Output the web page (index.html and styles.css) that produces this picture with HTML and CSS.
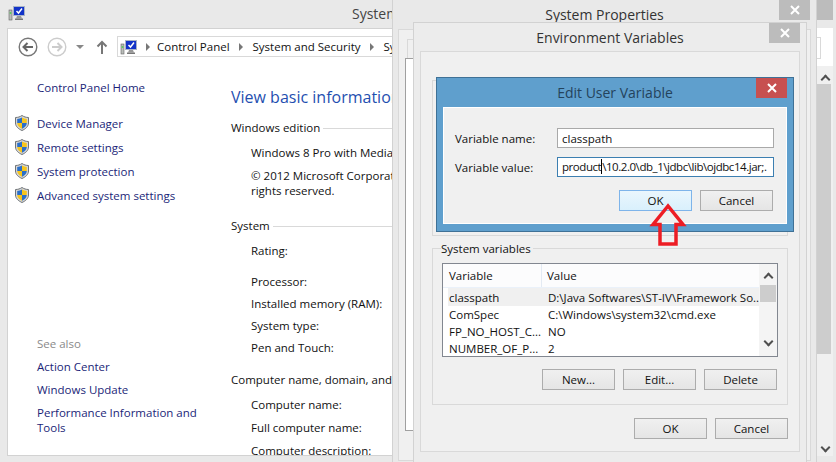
FILE: index.html
```html
<!DOCTYPE html>
<html lang="en">
<head>
    <meta charset="UTF-8">
    <meta name="viewport" content="width=device-width, initial-scale=1.0">
    <title>Edit User Variable</title>
    <link rel="stylesheet" href="styles.css">
</head>
<body>
    <svg class="defs" width="0" height="0">
        <symbol id="pc" viewBox="0 0 17 16">
            <rect x="1" y="5" width="3" height="10" fill="#b9bdb9" stroke="#666" stroke-width=".6"/>
            <rect x="1.7" y="7" width="1.6" height="2" fill="#5fcf5f"/>
            <rect x="5" y="1" width="12" height="10" fill="#a9b4c6"/>
            <rect x="6" y="2" width="10" height="8" fill="#1233c8"/>
            <path d="M8.5 6l2 2 3.500-4.500" fill="none" stroke="#fff" stroke-width="1.500"/>
            <path d="M9 11h4l1 2.500H8z" fill="#999"/>
            <rect x="7" y="13.500" width="8" height="1.500" fill="#777"/>
        </symbol>
        <symbol id="shield" viewBox="0 0 14 16">
            <path d="M7 .5c2 1.300 4 2 6.500 2v5.500c0 3.500-3 6-6.500 7.500C3.500 14 .5 11.500.5 8V2.500C3 2.500 5 1.800 7 .5z" fill="#d6d6d6" stroke="#6f7478"/>
            <path d="M7 2.500c1.500.9 3 1.400 4.800 1.600V8H7z" fill="#f6c51c"/>
            <path d="M7 2.500C5.500 3.400 4 3.900 2.200 4.100V8H7z" fill="#2a6fc9"/>
            <path d="M2.200 8H7v5.800C4.500 12.700 2.400 10.700 2.200 8z" fill="#f6c51c"/>
            <path d="M11.800 8H7v5.800c2.500-1.100 4.600-3.100 4.800-5.800z" fill="#2a6fc9"/>
        </symbol>
        <symbol id="x" viewBox="0 0 10 10">
            <path d="M1 1l8 8M9 1l-8 8" stroke="#fff" stroke-width="2" fill="none"/>
        </symbol>
    </svg>

    <!-- control panel, behind everything -->
    <div class="window explorer">
        <div class="titlebar">
            <svg class="title-icon" width="17" height="16"><use href="#pc"/></svg>
            <span class="explorer-title">System</span>
        </div>
        <div class="client">
            <div class="toolbar">
                <svg class="nav-btn" width="20" height="20" viewBox="0 0 20 20">
                    <circle cx="10" cy="10" r="8.800" fill="#fff" stroke="#777" stroke-width="1.400"/>
                    <path d="M15 10H6M9.500 6l-4 4 4 4" fill="none" stroke="#666" stroke-width="2"/>
                </svg>
                <svg class="nav-btn" width="20" height="20" viewBox="0 0 20 20">
                    <circle cx="10" cy="10" r="8.800" fill="#fff" stroke="#ccc" stroke-width="1.400"/>
                    <path d="M5 10h9M10.500 6l4 4-4 4" fill="none" stroke="#ccc" stroke-width="2"/>
                </svg>
                <span class="caret"></span>
                <svg class="up-btn" width="12" height="14" viewBox="0 0 12 14">
                    <path d="M6 14V2M1.500 6.500L6 2l4.500 4.500" fill="none" stroke="#777" stroke-width="2"/>
                </svg>
                <div class="address">
                    <svg width="17" height="16"><use href="#pc"/></svg>
                    <span class="crumb-arrow first"></span>
                    <span>Control Panel</span>
                    <span class="crumb-arrow"></span>
                    <span>System and Security</span>
                    <span class="crumb-arrow"></span>
                    <span>System</span>
                </div>
            </div>
            <div class="columns">
                <nav class="sidebar">
                    <a class="home">Control Panel Home</a>
                    <a class="task"><svg width="14" height="16"><use href="#shield"/></svg>Device Manager</a>
                    <a class="task"><svg width="14" height="16"><use href="#shield"/></svg>Remote settings</a>
                    <a class="task"><svg width="14" height="16"><use href="#shield"/></svg>System protection</a>
                    <a class="task"><svg width="14" height="16"><use href="#shield"/></svg>Advanced system settings</a>
                    <div class="see-also">See also</div>
                    <a class="also">Action Center</a>
                    <a class="also">Windows Update</a>
                    <a class="also">Performance Information and<br>Tools</a>
                </nav>
                <main class="info">
                    <h1>View basic information about your computer</h1>
                    <div class="section s-edition"><span>Windows edition</span></div>
                    <p class="line l-pro">Windows 8 Pro with Media Center</p>
                    <p class="line l-copy">© 2012 Microsoft Corporation. All<br>rights reserved.</p>
                    <div class="section s-system"><span>System</span></div>
                    <p class="line l-rating">Rating:</p>
                    <p class="line l-proc">Processor:</p>
                    <p class="line l-row">Installed memory (RAM):</p>
                    <p class="line l-row">System type:</p>
                    <p class="line l-row">Pen and Touch:</p>
                    <div class="section s-name"><span>Computer name, domain, and workgroup settings</span></div>
                    <p class="line l-cname">Computer name:</p>
                    <p class="line l-wide">Full computer name:</p>
                    <p class="line l-wide">Computer description:</p>
                </main>
            </div>
        </div>
    </div>

    <!-- second control panel edge at the far right -->
    <div class="window right-edge">
        <div class="edge-top"></div>
        <div class="edge-client">
            <div class="edge-tab"></div>
            <div class="edge-scroll">
                <span class="chev up"></span>
                <div class="edge-thumb"></div>
                <span class="chev down"></span>
            </div>
        </div>
    </div>

    <div class="window sysprops">
        <div class="dlg-title">System Properties</div>
        <button class="close grey"><svg width="10" height="10"><use href="#x"/></svg></button>
        <div class="sys-panel">
            <div class="sys-tab"></div>
            <div class="sys-page"></div>
        </div>
    </div>

    <div class="window envvars">
        <div class="dlg-title">Environment Variables</div>
        <button class="close grey"><svg width="10" height="10"><use href="#x"/></svg></button>
        <div class="env-panel">
            <fieldset class="group user-group">
                <legend>User variables for Ishan</legend>
            </fieldset>
            <fieldset class="group system-group">
                <legend>System variables</legend>
                <div class="list">
                    <div class="list-main">
                        <div class="list-head"><span class="col-a">Variable</span><span class="col-b">Value</span></div>
                        <div class="list-row selected"><span class="col-a">classpath</span><span class="col-b">D:\Java Softwares\ST-IV\Framework So...</span></div>
                        <div class="list-row"><span class="col-a">ComSpec</span><span class="col-b">C:\Windows\system32\cmd.exe</span></div>
                        <div class="list-row"><span class="col-a">FP_NO_HOST_C...</span><span class="col-b">NO</span></div>
                        <div class="list-row"><span class="col-a">NUMBER_OF_P...</span><span class="col-b">2</span></div>
                    </div>
                    <div class="list-scroll">
                        <span class="chev up"></span>
                        <div class="list-thumb"></div>
                        <span class="chev down"></span>
                    </div>
                </div>
                <div class="btn-row">
                    <button class="btn">New...</button>
                    <button class="btn">Edit...</button>
                    <button class="btn">Delete</button>
                </div>
            </fieldset>
            <div class="btn-row env-actions">
                <button class="btn">OK</button>
                <button class="btn">Cancel</button>
            </div>
        </div>
    </div>

    <div class="window editvar">
        <div class="edit-title">Edit User Variable</div>
        <button class="close red"><svg width="10" height="10"><use href="#x"/></svg></button>
        <div class="edit-body">
            <div class="field">
                <label for="varname">Variable name:</label>
                <input id="varname" type="text" value="classpath">
            </div>
            <div class="field">
                <label>Variable value:</label>
                <div class="input focused">product<span class="cursor"></span>\10.2.0\db_1\jdbc\lib\ojdbc14.jar;.</div>
            </div>
            <div class="btn-row edit-actions">
                <button class="btn hot">OK</button>
                <button class="btn">Cancel</button>
            </div>
        </div>
    </div>

    <svg class="pointer" width="38" height="44" viewBox="0 0 38 44">
        <path d="M19 3L4 21.500h7V41h16V21.500h7z" fill="none" stroke="#ed1c24" stroke-width="3.500"/>
    </svg>
</body>
</html>
```

FILE: styles.css
```css
html, body {
    margin: 0;
    height: 100%;
}
body {
    position: relative;
    width: 836px;
    height: 462px;
    overflow: hidden;
    background: #e9e9e9;
    font-family: "Open Sans", Arial, sans-serif;
    font-size: 11.5px;
    color: #111;
}
svg {
    flex: none;
}
.defs {
    position: absolute;
}
.window {
    position: absolute;
    box-sizing: border-box;
    overflow: hidden;
}
button {
    font-family: inherit;
    font-size: inherit;
    color: inherit;
}

/* control panel */
.explorer {
    left: 0;
    top: 0;
    width: 392px;
    height: 462px;
    background: #e9e9e9;
}
.titlebar {
    height: 28px;
    display: flex;
    align-items: flex-start;
}
.title-icon {
    margin: 5px 0 0 8px;
}
.explorer-title {
    margin: 4px 0 0 327px;
    font-size: 14px;
    color: #444;
    white-space: nowrap;
}
.client {
    margin-left: 7px;
    width: 385px;
    height: 428px;
    box-sizing: border-box;
    background: #fff;
    border: 1px solid #d2d2d2;
    border-right: none;
    overflow: hidden;
}
.toolbar {
    display: flex;
    align-items: center;
    height: 21px;
    margin-top: 7px;
    padding-left: 10px;
}
.nav-btn {
    margin-right: 9px;
}
.caret {
    flex: none;
    width: 0;
    height: 0;
    margin: 1px 0 0 0;
    border: 4px solid transparent;
    border-top: 4px solid #888;
    border-bottom: none;
}
.up-btn {
    margin: 0 0 0 12px;
}
.address {
    display: flex;
    align-items: center;
    flex: none;
    width: 300px;
    height: 21px;
    margin-left: 9px;
    padding-left: 2px;
    box-sizing: border-box;
    border: 1px solid #d9d9d9;
    white-space: nowrap;
}
.crumb-arrow {
    flex: none;
    width: 0;
    height: 0;
    margin: 0 10px 0 9px;
    border: 4px solid transparent;
    border-left: 4px solid #777;
    border-right: none;
}
.crumb-arrow.first {
    margin: 0 7px 0 9px;
}
.columns {
    display: flex;
}
.sidebar {
    width: 223px;
    flex: none;
    padding-left: 7px;
    box-sizing: border-box;
    color: #1b1f78;
}
.sidebar a {
    display: block;
    line-height: 15px;
}
.home {
    margin: 23px 0 20px 22px;
}
.sidebar .task {
    display: flex;
    align-items: center;
    gap: 8px;
    height: 16px;
    margin-bottom: 8px;
}
.see-also {
    margin: 133px 0 8px 22px;
    line-height: 15px;
    color: #8a8a8a;
}
.also {
    margin: 0 0 8px 22px;
}
.info {
    flex: none;
    width: 300px;
}
.info h1 {
    margin: 29px 0 0;
    font-size: 16px;
    font-weight: 400;
    line-height: 22px;
    color: #1f4fb0;
    white-space: nowrap;
}
.section {
    display: flex;
    align-items: center;
    line-height: 15px;
    white-space: nowrap;
}
.section span {
    padding-right: 3px;
}
.section::after {
    content: "";
    flex: 1;
    height: 1px;
    margin-top: 2px;
    background: #d9d9d9;
}
.s-edition { margin-top: 12px; }
.s-system { margin-top: 20px; }
.s-name { margin-top: 17px; }
.line {
    margin: 0 0 0 20px;
    line-height: 15px;
    white-space: nowrap;
}
.l-pro { margin-top: 10px; }
.l-copy { margin-top: 8px; }
.l-rating { margin-top: 10px; }
.l-proc { margin-top: 16px; }
.l-row { margin-top: 7px; }
.l-wide { margin-top: 8px; }
.l-cname { margin-top: 10px; }

/* far right sliver */
.right-edge {
    left: 817px;
    top: 0;
    width: 19px;
    height: 462px;
    background: #e9e9e9;
}
.edge-top {
    height: 20px;
    width: 16px;
    background: #bcbcbc;
}
.edge-client {
    margin-top: 8px;
    width: 16px;
    height: 428px;
    background: #fff;
    position: relative;
}
.edge-tab {
    width: 3px;
    height: 20px;
    top: 9px;
    position: absolute;
    border: 1px solid #d9d9d9;
    border-left: none;
}
.edge-scroll {
    position: absolute;
    top: 38px;
    left: 0;
    right: 0;
    bottom: 0;
    background: #f0f0f0;
    display: flex;
    flex-direction: column;
    align-items: center;
}
.edge-thumb {
    align-self: stretch;
    height: 270px;
    margin: 1px 2px 0 0;
    background: #cdcdcd;
}
.chev {
    display: block;
    width: 7px;
    height: 7px;
    flex: none;
    box-sizing: border-box;
    border: solid #505050;
    border-width: 2px 0 0 2px;
    transform: rotate(45deg);
}
.chev.down {
    transform: rotate(225deg);
}
.edge-scroll .chev.up {
    margin-top: 10px;
}
.edge-scroll .chev.down {
    margin-top: 90px;
}

/* system properties */
.sysprops {
    left: 392px;
    top: 0;
    width: 425px;
    height: 462px;
    background: #e9e9e9;
    border-left: 1px solid #d2d2d2;
    border-right: 1px solid #d2d2d2;
}
.dlg-title {
    text-align: center;
    font-size: 14px;
    color: #333;
    line-height: 20px;
}
.sysprops .dlg-title {
    padding-top: 5px;
}
.close {
    position: absolute;
    top: 0;
    width: 31px;
    height: 20px;
    padding: 0;
    border: none;
    display: flex;
    align-items: center;
    justify-content: center;
}
.close.grey {
    background: #bcbcbc;
}
.close.red {
    background: #c75050;
}
.sysprops .close {
    right: 6px;
}
.sys-panel {
    margin: 4px 5px 0;
    height: 430px;
    background: #f0f0f0;
    border: 1px solid #d9d9d9;
    position: relative;
}
.sys-tab {
    position: absolute;
    left: 8px;
    top: 9px;
    width: 380px;
    height: 19px;
    border: 1px solid #d9d9d9;
    background: #f0f0f0;
}
.sys-page {
    position: absolute;
    left: 6px;
    top: 28px;
    width: 398px;
    height: 371px;
    background: #fff;
    border: 1px solid #a0a0a0;
}

/* environment variables */
.envvars {
    left: 413px;
    top: 22px;
    width: 394px;
    height: 440px;
    background: #ececec;
    border: 1px solid #d2d2d2;
    border-bottom: none;
}
.envvars .dlg-title {
    padding-top: 5px;
}
.envvars .close {
    top: 0;
    right: 6px;
}
.env-panel {
    margin: 3px 6px 0;
    height: 401px;
    box-sizing: border-box;
    padding: 21px 11px 0;
    background: #f0f0f0;
    border: 1px solid #d9d9d9;
}
.group {
    margin: 0;
    padding: 0 10px;
    border: 1px solid #d9d9d9;
    min-width: 0;
}
.group legend {
    margin-left: -1px;
    padding: 0 2px 0 0;
    line-height: 15px;
}
.user-group {
    height: 163px;
    box-sizing: border-box;
}
.system-group {
    margin-top: 5px;
    height: 164px;
    box-sizing: border-box;
    padding: 0 9px;
}
.list {
    display: flex;
    height: 94px;
    margin-top: 7px;
    box-sizing: border-box;
    background: #fff;
    border: 1px solid #828790;
    padding-left: 0;
}
.list-main {
    flex: 1;
    min-width: 0;
}
.list-head {
    display: flex;
    height: 23px;
    align-items: center;
    background: #fcfcfd;
    border-bottom: 1px solid #eaf1fa;
}
.list-row {
    display: flex;
    height: 17px;
    align-items: center;
    margin-left: 5px;
    white-space: nowrap;
}
.list-row .col-a {
    width: 99px;
    margin-left: 1px;
}
.list-row.selected {
    height: 18px;
    background: #f0f0f0;
}
.col-a {
    flex: none;
}
.list-head .col-a {
    padding-left: 6px;
    width: 92px;
    line-height: 23px;
    border-right: 1px solid #e3eaf3;
}
.list-head .col-b {
    padding-left: 5px;
}
.list-scroll {
    width: 18px;
    flex: none;
    background: #f4f4f4;
    display: flex;
    flex-direction: column;
    align-items: center;
}
.list-scroll .chev.up {
    margin-top: 10px;
}
.list-thumb {
    align-self: stretch;
    height: 17px;
    margin: 4px 1px 0;
    background: #cdcdcd;
}
.list-scroll .chev.down {
    margin-top: 36px;
}
.btn-row {
    display: flex;
    justify-content: flex-end;
    gap: 8px;
}
.btn {
    width: 73px;
    height: 21px;
    padding: 0;
    box-sizing: border-box;
    background: linear-gradient(#f0f0f0, #e5e5e5);
    border: 1px solid #acacac;
}
.system-group .btn-row {
    margin: 12px 1px 0 0;
}
.env-actions {
    margin-top: 13px;
}

/* edit user variable */
.editvar {
    left: 436px;
    top: 77px;
    width: 358px;
    height: 155px;
    background: #5f9fcd;
    border: 1px solid #3f7196;
}
.edit-title {
    height: 29px;
    text-align: center;
    font-size: 14px;
    line-height: 30px;
    color: #24435c;
}
.editvar .close {
    top: 0;
    right: 6px;
}
.edit-body {
    margin: 0 6px;
    height: 117px;
    box-sizing: border-box;
    padding: 20px 12px 0 11px;
    background: #f0f0f0;
    border: 1px solid #fff;
}
.field {
    display: flex;
    align-items: center;
    margin-bottom: 9px;
}
.field label {
    width: 102px;
    flex: none;
}
.field input, .input {
    width: 218px;
    height: 20px;
    padding: 0 4px;
    box-sizing: border-box;
    font-family: inherit;
    font-size: inherit;
    color: #111;
    line-height: 18px;
    background: #fff;
    border: 1px solid #a9a9a9;
    white-space: nowrap;
    overflow: hidden;
}
.input.focused {
    border-color: #3c7fb1;
    letter-spacing: -0.45px;
}
.cursor {
    display: inline-block;
    width: 1px;
    height: 15px;
    vertical-align: -3px;
    background: #000;
}
.edit-actions {
    margin: 13px 1px 0 0;
}
.btn.hot {
    background: linear-gradient(#eaf6fd, #d9f0fc);
    border-color: #7eb4ea;
}

.pointer {
    position: absolute;
    left: 649px;
    top: 203px;
}
```
